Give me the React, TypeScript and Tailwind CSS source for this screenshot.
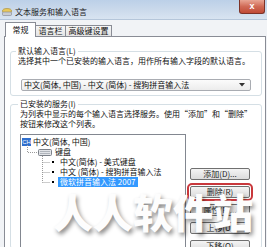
import React from "react";

function Btn({ label, red }: { label: string; red?: boolean }) {
  return (
    <div
      className={
        "h-[12px] w-[60px] rounded-[2px] border border-[#707070] bg-gradient-to-b from-[#f4f4f4] to-[#dcdcdc] flex items-center justify-center text-[8px] leading-[10px] text-[#222]" +
        (red ? " outline-2 outline-[#c9383c] outline-offset-[1px]" : "")
      }
    >
      {label}
    </div>
  );
}

export default function App() {
  return (
    <div className="relative w-[267px] h-[247px] overflow-hidden bg-[#f1f3f6] font-['Noto_Sans_CJK_SC','Noto_Sans',sans-serif] text-[8px] leading-[10px] text-[#111]">
      {/* Title bar */}
      <div className="relative h-[20px] bg-gradient-to-b from-[#bcd0e8] via-[#cad9eb] to-[#d8e4f1] flex items-center pl-[2px] pt-[4px] border-b border-[#b5c6da]">
        <svg width="10" height="8" viewBox="0 0 10 8">
          <ellipse cx="5" cy="3" rx="4.5" ry="2.5" fill="#e9c85a" stroke="#a88a2a" strokeWidth="0.6" />
          <rect x="0.5" y="4" width="9" height="3.5" rx="1" fill="#c9ccd2" stroke="#80858c" strokeWidth="0.6" />
        </svg>
        <span className="ml-[3px] text-[8px] leading-[10px] text-[#1a1a1a]">文本服务和输入语言</span>
        <div className="absolute right-[2px] top-0 w-[26px] h-[14px] rounded-b-[3px] border border-t-0 border-[#7d3328] bg-gradient-to-b from-[#e8a594] via-[#d06a56] to-[#c04a36] flex items-center justify-center text-white text-[9px] leading-[9px] font-bold font-['Liberation_Sans',sans-serif]">
          x
        </div>
      </div>

      {/* Client */}
      <div className="pl-[4px] pt-[2px]">
        {/* Tabs */}
        <div className="flex items-end h-[15px] ml-[1px]">
          <div className="relative z-10 h-[15px] w-[31px] border border-b-0 border-[#898c95] bg-white flex items-center justify-center pb-[1px]">
            常规
          </div>
          <div className="h-[11px] mb-[1px] w-[30px] border border-l-0 border-b-0 border-[#898c95] bg-gradient-to-b from-[#f6f6f6] to-[#e4e4e4] flex items-center justify-center">
            语言栏
          </div>
          <div className="h-[11px] mb-[1px] w-[46px] border border-l-0 border-b-0 border-[#898c95] bg-gradient-to-b from-[#f6f6f6] to-[#e4e4e4] flex items-center justify-center">
            高级键设置
          </div>
        </div>

        {/* Panel */}
        <div className="-mt-px w-[262px] h-[220px] border border-[#898c95] bg-white">
          {/* Group 1 */}
          <fieldset className="ml-[5px] mt-[9px] w-[252px] border border-[#d5dfe5] rounded-[3px] pl-[7px] pb-[4px]">
            <legend className="-ml-[2px] px-[2px]">默认输入语言(L)</legend>
            <div className="whitespace-nowrap">选择其中一个已安装的输入语言，用作所有输入字段的默认语言。</div>
            <div className="mt-[13px] ml-[3px] w-[230px] h-[12px] border border-[#a9acb2] rounded-[2px] bg-gradient-to-b from-[#fbfbfb] to-[#ececec] flex items-center pl-[2px] pr-[5px]">
              <span className="flex-1 whitespace-nowrap">中文(简体, 中国) - 中文 (简体) - 搜狗拼音输入法</span>
              <svg width="6" height="4" viewBox="0 0 6 4">
                <path d="M0 0 L6 0 L3 3.5 Z" fill="#333" />
              </svg>
            </div>
          </fieldset>

          {/* Group 2 */}
          <fieldset className="ml-[5px] mt-[3px] w-[252px] h-[150px] border border-[#d5dfe5] rounded-[3px] pl-[9px]">
            <legend className="-ml-[2px] px-[2px]">已安装的服务(I)</legend>
            <div className="whitespace-nowrap">为列表中显示的每个输入语言选择服务。使用“添加”和“删除”</div>
            <div className="whitespace-nowrap">按钮来修改这个列表。</div>
            <div className="mt-[5px] flex items-start">
              {/* Tree */}
              <div className="relative w-[166px] h-[120px] border border-[#828790] bg-white pt-[2px]">
                <svg className="absolute left-0 top-0" width="60" height="60" viewBox="0 0 60 60">
                  <g stroke="#9a9a9a" strokeWidth="1" strokeDasharray="1 1" fill="none">
                    <path d="M6.5 10 V17.5 H16" />
                    <path d="M21.5 21 V47.5" />
                    <path d="M21.5 27.5 H29" />
                    <path d="M21.5 37.5 H29" />
                    <path d="M21.5 47.5 H29" />
                  </g>
                </svg>
                <div className="h-[10px] flex items-center pl-[1px]">
                  <span className="w-[9px] h-[8px] bg-[#2f6fce] text-white text-[6px] leading-[8px] flex items-center justify-center font-['Liberation_Sans',sans-serif]">CH</span>
                  <span className="ml-[2px] whitespace-nowrap">中文(简体, 中国)</span>
                </div>
                <div className="h-[10px] flex items-center pl-[17px]">
                  <svg width="14" height="8" viewBox="0 0 14 8">
                    <rect x="0.5" y="1.5" width="13" height="6" rx="1" fill="#e2e4e8" stroke="#7c8189" />
                    <path d="M2 3.5h10M2 5.5h10" stroke="#a3a8b0" strokeWidth="0.8" />
                  </svg>
                  <span className="ml-[3px]">键盘</span>
                </div>
                <div className="h-[10px] flex items-center pl-[31px]">
                  <span className="w-[2px] h-[2px] bg-black" />
                  <span className="ml-[6px] whitespace-nowrap">中文(简体) - 美式键盘</span>
                </div>
                <div className="h-[10px] flex items-center pl-[31px]">
                  <span className="w-[2px] h-[2px] bg-black" />
                  <span className="ml-[6px] whitespace-nowrap">中文 (简体) - 搜狗拼音输入法</span>
                </div>
                <div className="h-[10px] flex items-center pl-[31px]">
                  <span className="w-[2px] h-[2px] bg-black" />
                  <span className="ml-[4px] px-[2px] bg-[#3399ff] text-white whitespace-nowrap">微软拼音输入法 2007</span>
                </div>
              </div>
              {/* Buttons */}
              <div className="ml-[4px] mt-[34px] flex flex-col gap-[6px]">
                <Btn label="添加(D)..." />
                <Btn label="删除(R)" red />
                <Btn label="属性(P)..." />
                <Btn label="上移(U)" />
                <Btn label="下移(O)" />
              </div>
            </div>
          </fieldset>
        </div>
      </div>

      {/* Watermark */}
      <div className="pointer-events-none absolute left-[53px] top-[191px] whitespace-nowrap text-[40px] leading-none font-black text-[#fdfdfd] [text-shadow:2px_3px_4px_rgba(0,0,0,0.45)]">
        人人软件站
      </div>
    </div>
  );
}
